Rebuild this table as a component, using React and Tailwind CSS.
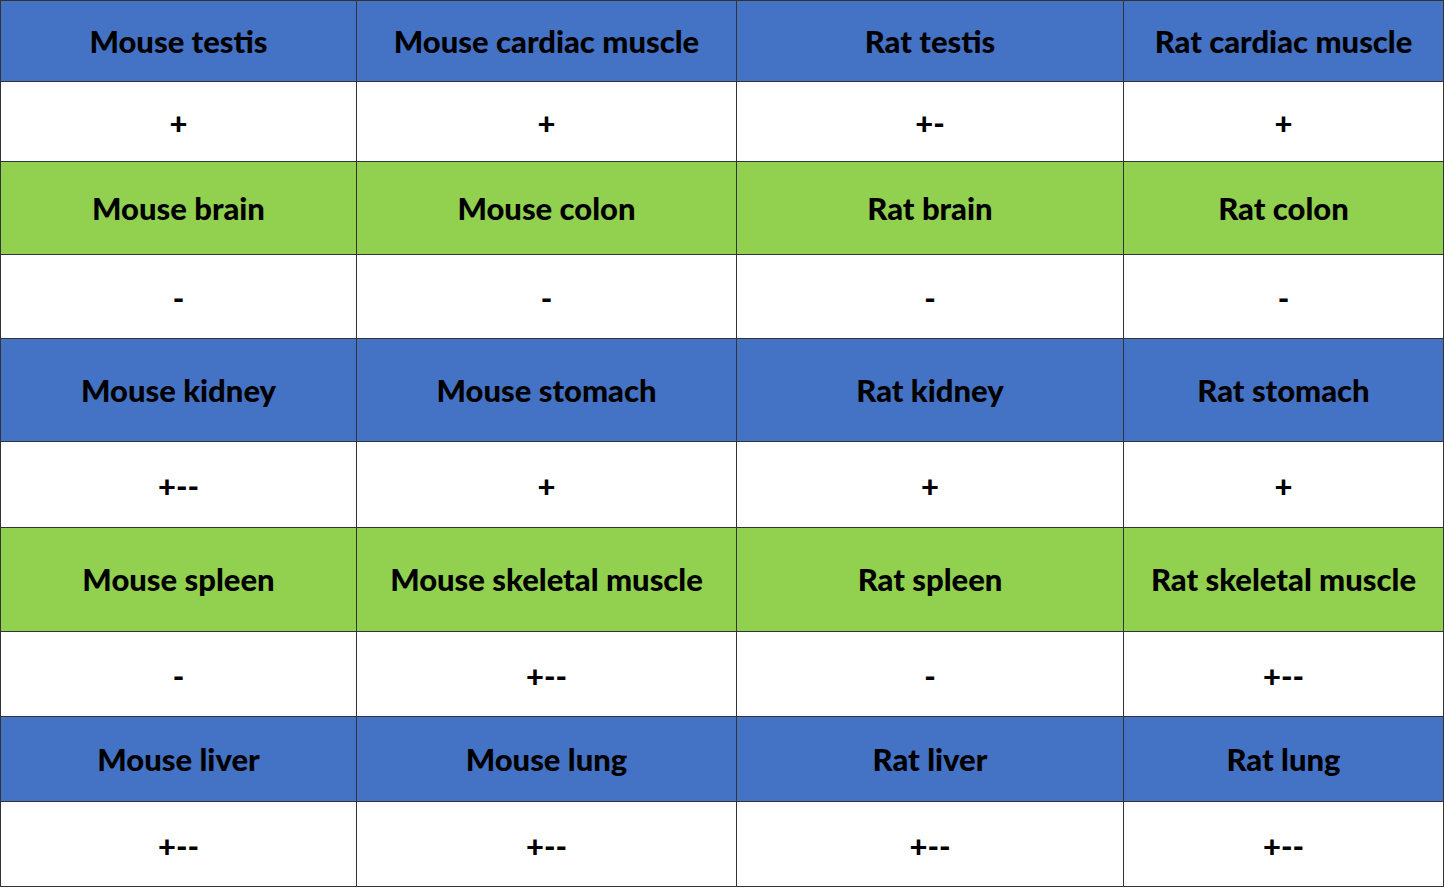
import React from 'react';

const rows = [
    { kind: 'blue', h: 'h-[80px]', cells: ['Mouse testis', 'Mouse cardiac muscle', 'Rat testis', 'Rat cardiac muscle'] },
    { kind: 'white', h: 'h-[79px]', cells: ['+', '+', '+-', '+'] },
    { kind: 'green', h: 'h-[92px]', cells: ['Mouse brain', 'Mouse colon', 'Rat brain', 'Rat colon'] },
    { kind: 'white', h: 'h-[83px]', cells: ['-', '-', '-', '-'] },
    { kind: 'blue', h: 'h-[102px]', cells: ['Mouse kidney', 'Mouse stomach', 'Rat kidney', 'Rat stomach'] },
    { kind: 'white', h: 'h-[85px]', cells: ['+--', '+', '+', '+'] },
    { kind: 'green', h: 'h-[103px]', cells: ['Mouse spleen', 'Mouse skeletal muscle', 'Rat spleen', 'Rat skeletal muscle'] },
    { kind: 'white', h: 'h-[84px]', cells: ['-', '+--', '-', '+--'] },
    { kind: 'blue', h: 'h-[84px]', cells: ['Mouse liver', 'Mouse lung', 'Rat liver', 'Rat lung'] },
    { kind: 'white', h: 'h-[84px]', cells: ['+--', '+--', '+--', '+--'] },
];

const bg = {
    blue: 'bg-[#4472c4]',
    green: 'bg-[#92d050]',
    white: 'bg-white pt-[4px]',
};

export default function App() {
    return (
        <div className="w-[1445px] h-[888px] bg-white">
            <div
                className="w-[1444px] grid grid-cols-[355px_379px_386px_319px] gap-px p-px bg-[#333333] text-black font-black text-[31px]"
                style={{ fontFamily: 'Lato, "Open Sans", sans-serif' }}
            >
                {rows.map((row, i) =>
                    row.cells.map((text, j) => (
                        <div
                            key={`${i}-${j}`}
                            className={`${row.h} ${bg[row.kind]} flex items-center justify-center`}
                        >
                            {text}
                        </div>
                    ))
                )}
            </div>
        </div>
    );
}
